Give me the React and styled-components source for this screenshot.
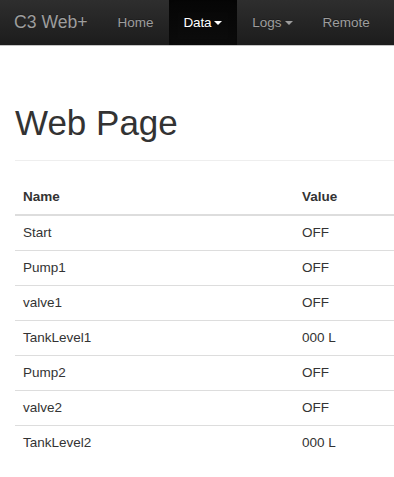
import React from "react";
import styled, { createGlobalStyle } from "styled-components";

const Global = createGlobalStyle`
  html, body { margin: 0; padding: 0; background: #fff; }
  body { font-family: "Liberation Sans", Arial, sans-serif; color: #333; }
  * { box-sizing: border-box; }
`;

const Navbar = styled.nav`
  height: 46px;
  display: flex;
  align-items: stretch;
  background: linear-gradient(to bottom, #2e2e2e 0%, #1c1c1c 100%);
  border-bottom: 1px solid #c4c4c4;
`;

const Brand = styled.a`
  display: flex;
  align-items: center;
  padding: 0 15px 0 14px;
  font-size: 17.6px;
  color: #9d9d9d;
  text-shadow: 0 -1px 0 rgba(0, 0, 0, 0.25);
  text-decoration: none;
`;

const NavLink = styled.a`
  display: flex;
  align-items: center;
  padding: 0 15px;
  font-size: 13.5px;
  color: ${(p) => (p.$active ? "#fff" : "#9d9d9d")};
  background: ${(p) =>
    p.$active ? "linear-gradient(to bottom, #060606 0%, #0c0c0c 100%)" : "transparent"};
  box-shadow: ${(p) => (p.$active ? "inset 0 3px 9px rgba(0,0,0,0.25)" : "none")};
  text-shadow: 0 -1px 0 rgba(0, 0, 0, 0.25);
  text-decoration: none;
  letter-spacing: ${(p) => (p.$active ? "-0.2px" : "0")};
`;

const Caret = styled.span`
  display: inline-block;
  width: 0;
  height: 0;
  margin-left: 3px;
  border-top: 4px solid currentColor;
  border-left: 4px solid transparent;
  border-right: 4px solid transparent;
  vertical-align: middle;
`;

const Container = styled.main`
  padding-left: 15px;
`;

const PageHeader = styled.div`
  margin-top: 57px;
  padding-bottom: 17px;
  border-bottom: 1px solid #eee;
`;

const Title = styled.h1`
  margin: 0;
  font-size: 35px;
  font-weight: 400;
  line-height: 40px;
  color: #333;
`;

const Table = styled.table`
  width: 100%;
  margin-top: 19px;
  border-collapse: collapse;
  border-spacing: 0;
  font-size: 13.5px;
`;

const Th = styled.th`
  text-align: left;
  font-weight: 700;
  padding: 8px;
  line-height: 18px;
  border-bottom: 2px solid #ddd;
  width: ${(p) => p.$w || "auto"};
`;

const Td = styled.td`
  padding: 8px;
  line-height: 18px;
  border-top: ${(p) => (p.$first ? "0" : "1px solid #ddd")};
`;

const rows = [
  ["Start", "OFF"],
  ["Pump1", "OFF"],
  ["valve1", "OFF"],
  ["TankLevel1", "000 L"],
  ["Pump2", "OFF"],
  ["valve2", "OFF"],
  ["TankLevel2", "000 L"],
];

export default function App() {
  return (
    <>
      <Global />
      <Navbar>
        <Brand href="#">C3 Web+</Brand>
        <NavLink href="#">Home</NavLink>
        <NavLink href="#" $active>
          Data<Caret />
        </NavLink>
        <NavLink href="#">
          Logs<Caret />
        </NavLink>
        <NavLink href="#">Remote</NavLink>
      </Navbar>
      <Container>
        <PageHeader>
          <Title>Web Page</Title>
        </PageHeader>
        <Table>
          <thead>
            <tr>
              <Th $w="279px">Name</Th>
              <Th>Value</Th>
            </tr>
          </thead>
          <tbody>
            {rows.map(([n, v], i) => (
              <tr key={n}>
                <Td $first={i === 0}>{n}</Td>
                <Td $first={i === 0}>{v}</Td>
              </tr>
            ))}
          </tbody>
        </Table>
      </Container>
    </>
  );
}
